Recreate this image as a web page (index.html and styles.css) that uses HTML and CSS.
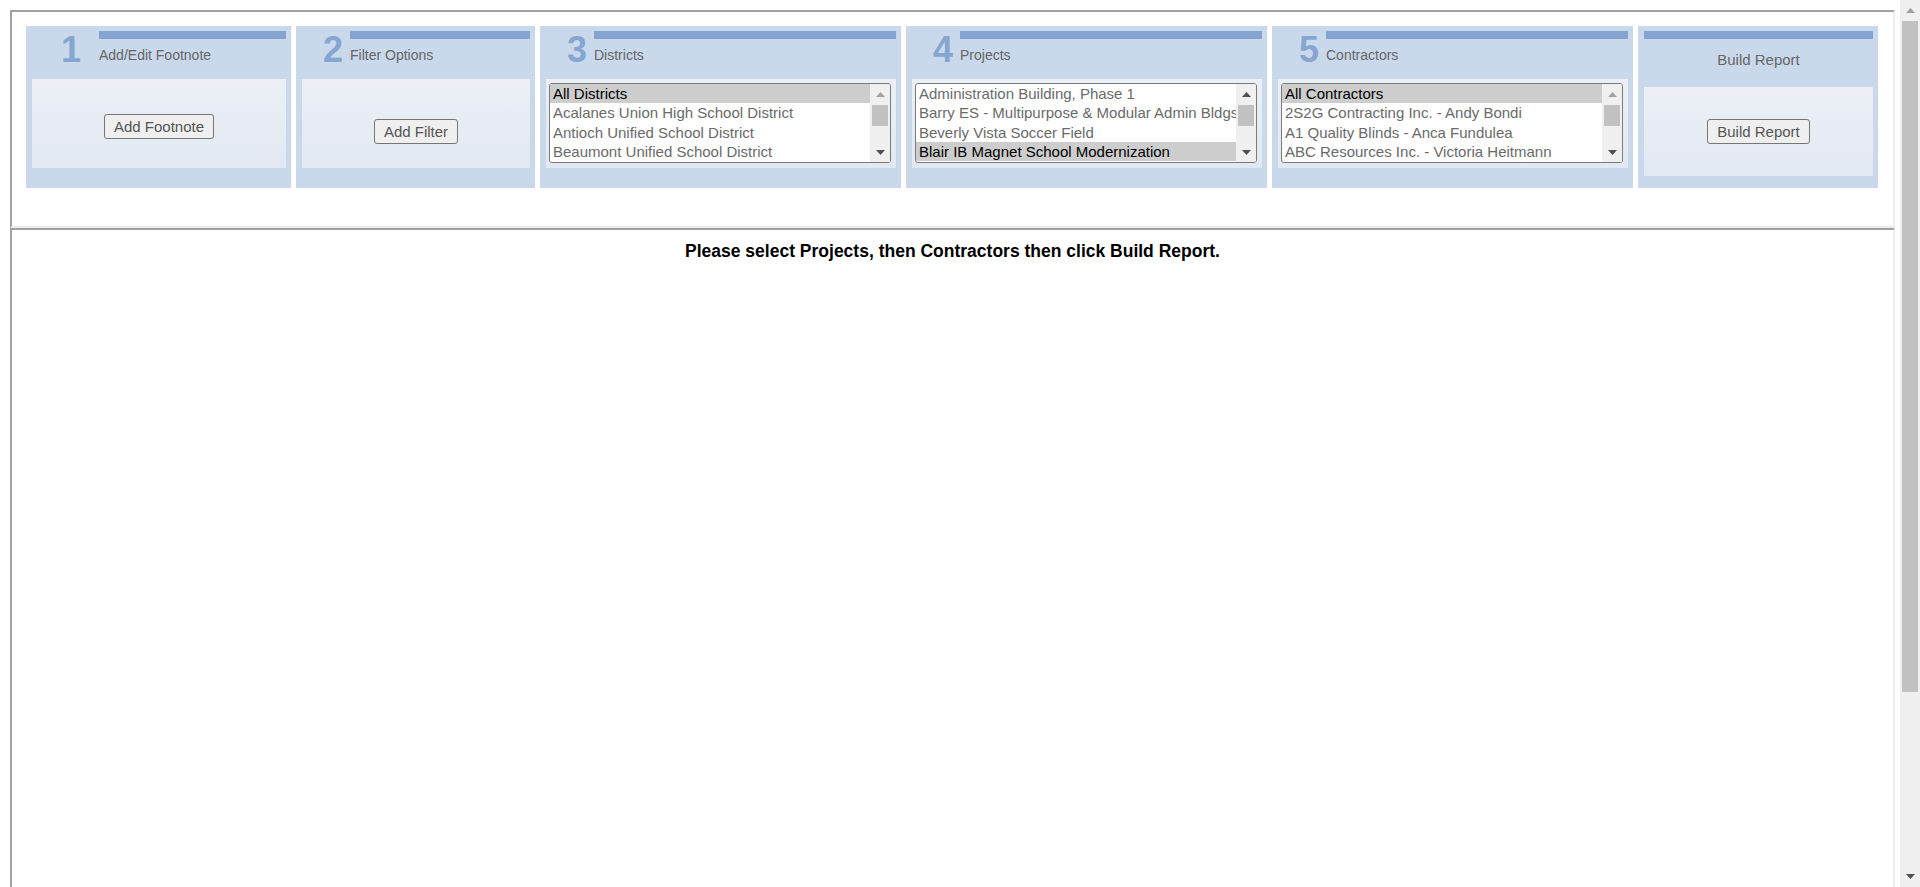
FILE: index.html
```html
<!DOCTYPE html>
<html lang="en">
<head>
<meta charset="utf-8">
<title>Report Builder</title>
<link rel="stylesheet" href="styles.css">
</head>
<body>
<div class="page">
  <div class="frame frame-top">
    <div class="steps">
      <section class="step">
        <div class="step-head">
          <span class="step-num step-num-first">1</span>
          <div class="step-title">
            <div class="step-bar"></div>
            <div class="step-label">Add/Edit Footnote</div>
          </div>
        </div>
        <div class="step-body body-footnote"><button class="btn" type="button">Add Footnote</button></div>
      </section>
      <section class="step">
        <div class="step-head">
          <span class="step-num">2</span>
          <div class="step-title">
            <div class="step-bar"></div>
            <div class="step-label">Filter Options</div>
          </div>
        </div>
        <div class="step-body body-filter"><button class="btn" type="button">Add Filter</button></div>
      </section>
      <section class="step">
        <div class="step-head">
          <span class="step-num">3</span>
          <div class="step-title">
            <div class="step-bar"></div>
            <div class="step-label">Districts</div>
          </div>
        </div>
        <div class="step-body body-list">
          <div class="listbox" role="listbox" aria-multiselectable="true">
            <div class="listbox-items">
              <div class="opt opt-selected" role="option">All Districts</div>
              <div class="opt" role="option">Acalanes Union High School District</div>
              <div class="opt" role="option">Antioch Unified School District</div>
              <div class="opt" role="option">Beaumont Unified School District</div>
            </div>
            <div class="vscroll">
              <div class="sb-btn"><svg class="tri tri-off" width="9" height="5" viewBox="0 0 9 5"><polygon points="0,5 4.5,0 9,5"/></svg></div>
              <div class="sb-thumb"></div>
              <div class="sb-track"></div>
              <div class="sb-btn"><svg class="tri" width="9" height="5" viewBox="0 0 9 5"><polygon points="0,0 9,0 4.5,5"/></svg></div>
            </div>
          </div>
        </div>
      </section>
      <section class="step">
        <div class="step-head">
          <span class="step-num">4</span>
          <div class="step-title">
            <div class="step-bar"></div>
            <div class="step-label">Projects</div>
          </div>
        </div>
        <div class="step-body body-list">
          <div class="listbox" role="listbox" aria-multiselectable="true">
            <div class="listbox-items">
              <div class="opt" role="option">Administration Building, Phase 1</div>
              <div class="opt" role="option">Barry ES - Multipurpose &amp; Modular Admin Bldgs</div>
              <div class="opt" role="option">Beverly Vista Soccer Field</div>
              <div class="opt opt-selected" role="option">Blair IB Magnet School Modernization</div>
            </div>
            <div class="vscroll">
              <div class="sb-btn"><svg class="tri" width="9" height="5" viewBox="0 0 9 5"><polygon points="0,5 4.5,0 9,5"/></svg></div>
              <div class="sb-thumb"></div>
              <div class="sb-track"></div>
              <div class="sb-btn"><svg class="tri" width="9" height="5" viewBox="0 0 9 5"><polygon points="0,0 9,0 4.5,5"/></svg></div>
            </div>
          </div>
        </div>
      </section>
      <section class="step">
        <div class="step-head">
          <span class="step-num">5</span>
          <div class="step-title">
            <div class="step-bar"></div>
            <div class="step-label">Contractors</div>
          </div>
        </div>
        <div class="step-body body-list">
          <div class="listbox" role="listbox" aria-multiselectable="true">
            <div class="listbox-items">
              <div class="opt opt-selected" role="option">All Contractors</div>
              <div class="opt" role="option">2S2G Contracting Inc. - Andy Bondi</div>
              <div class="opt" role="option">A1 Quality Blinds - Anca Fundulea</div>
              <div class="opt" role="option">ABC Resources Inc. - Victoria Heitmann</div>
            </div>
            <div class="vscroll">
              <div class="sb-btn"><svg class="tri tri-off" width="9" height="5" viewBox="0 0 9 5"><polygon points="0,5 4.5,0 9,5"/></svg></div>
              <div class="sb-thumb"></div>
              <div class="sb-track"></div>
              <div class="sb-btn"><svg class="tri" width="9" height="5" viewBox="0 0 9 5"><polygon points="0,0 9,0 4.5,5"/></svg></div>
            </div>
          </div>
        </div>
      </section>
      <section class="step step-final">
        <div class="step-head step-head-final">
          <div class="step-bar"></div>
          <div class="step-label step-label-final">Build Report</div>
        </div>
        <div class="step-body body-build"><button class="btn" type="button">Build Report</button></div>
      </section>
    </div>
  </div>
  <div class="frame frame-bottom">
    <p class="message">Please select Projects, then Contractors then click Build Report.</p>
  </div>
</div>
<div class="page-scroll">
  <div class="psb-btn"><svg class="tri tri-mid" width="9" height="5" viewBox="0 0 9 5"><polygon points="0,5 4.5,0 9,5"/></svg></div>
  <div class="psb-thumb"></div>
  <div class="sb-track"></div>
  <div class="psb-btn"><svg class="tri" width="9" height="5" viewBox="0 0 9 5"><polygon points="0,0 9,0 4.5,5"/></svg></div>
</div>
</body>
</html>
```
FILE: styles.css
```css
html, body {
  margin: 0;
}
body {
  background: #ffffff;
  font-family: Arial, "Liberation Sans", sans-serif;
  display: flex;
  height: 100vh;
  overflow: hidden;
}
.page {
  flex: 1;
  min-width: 0;
  padding-top: 10px;
  overflow: hidden;
}
.frame {
  width: 1885px;
  margin-left: 10px;
  box-sizing: border-box;
  border-style: solid;
  border-width: 2px;
  border-color: #a0a0a0 #ececec #ececec #a0a0a0;
}
.frame-top {
  height: 218px;
  padding: 14px 15px 0 14px;
}
.steps {
  display: grid;
  grid-template-columns: 265px 239px 361px 361px 361px 240px;
  column-gap: 5px;
}
.step {
  background: #c9d8eb;
  height: 162px;
  box-sizing: border-box;
  padding: 5px 5px 20px 6px;
  display: flex;
  flex-direction: column;
}
.step-head {
  height: 48px;
  display: flex;
  align-items: flex-start;
}
.step-num {
  font-weight: bold;
  font-size: 36px;
  line-height: 38px;
  color: #86a6d2;
  width: 20px;
  margin-left: 21px;
  margin-right: 7px;
}
.step-num-first {
  margin-left: 29px;
  margin-right: 18px;
}
.step-title {
  flex: 1;
}
.step-bar {
  height: 8px;
  background: #84a4cf;
}
.step-label {
  font-size: 14px;
  line-height: 16px;
  color: #666666;
  margin-top: 8px;
}
.step-body {
  height: 89px;
  box-sizing: border-box;
  background: linear-gradient(#ecf0f6, #e2e8f2);
  text-align: center;
}
.body-footnote {
  padding-top: 35px;
}
.body-filter {
  padding-top: 40px;
}
.body-list {
  text-align: left;
  padding: 4px 5px 0 3px;
}
.step-final {
  padding-bottom: 12px;
}
.step-head-final {
  height: 56px;
  display: block;
}
.step-label-final {
  font-size: 15px;
  line-height: 17px;
  margin-top: 12px;
  text-align: center;
}
.body-build {
  padding-top: 32px;
}
.btn {
  font-family: Arial, "Liberation Sans", sans-serif;
  font-size: 15px;
  line-height: 17px;
  color: #555555;
  background: #efefef;
  border: 1px solid #767676;
  border-radius: 3px;
  padding: 3px 9px;
  height: 25px;
  margin: 0;
}

/* list boxes */
.listbox {
  display: flex;
  height: 80px;
  box-sizing: border-box;
  border: 1px solid #7a7a7a;
  border-radius: 3px;
  background: #ffffff;
  overflow: hidden;
}
.listbox-items {
  flex: 1;
  min-width: 0;
  font-size: 15px;
  line-height: 19.33px;
  color: #6a6a6a;
}
.opt {
  padding: 0 3px;
  white-space: nowrap;
  overflow: hidden;
  cursor: default;
}
.opt-selected {
  background: #cdcdcd;
  color: #000000;
}
.vscroll {
  width: 20px;
  flex: none;
  display: flex;
  flex-direction: column;
  background: #f0f0f0;
}
.sb-btn {
  height: 20px;
  flex: none;
  display: flex;
  align-items: center;
  justify-content: center;
}
.sb-thumb {
  height: 21px;
  margin: 1px 2px 0 2px;
  background: #c1c1c1;
  flex: none;
}
.sb-track {
  flex: 1;
}
.tri {
  display: block;
  fill: #505050;
}
.tri-off {
  fill: #a3a3a3;
}
.tri-mid {
  fill: #a0a0a0;
}

/* page scrollbar */
.page-scroll {
  width: 20px;
  flex: none;
  display: flex;
  flex-direction: column;
  background: #f0f0f0;
}
.psb-btn {
  height: 21px;
  flex: none;
  display: flex;
  align-items: center;
  justify-content: center;
}
.psb-thumb {
  height: 671px;
  flex: none;
  margin: 0 2px;
  background: #c1c1c1;
}

.frame-bottom {
  height: 910px;
  border-bottom: none;
}
.message {
  margin: 11px 0 0;
  text-align: center;
  font-weight: bold;
  font-size: 17.5px;
  line-height: 20px;
  color: #000000;
}
```
